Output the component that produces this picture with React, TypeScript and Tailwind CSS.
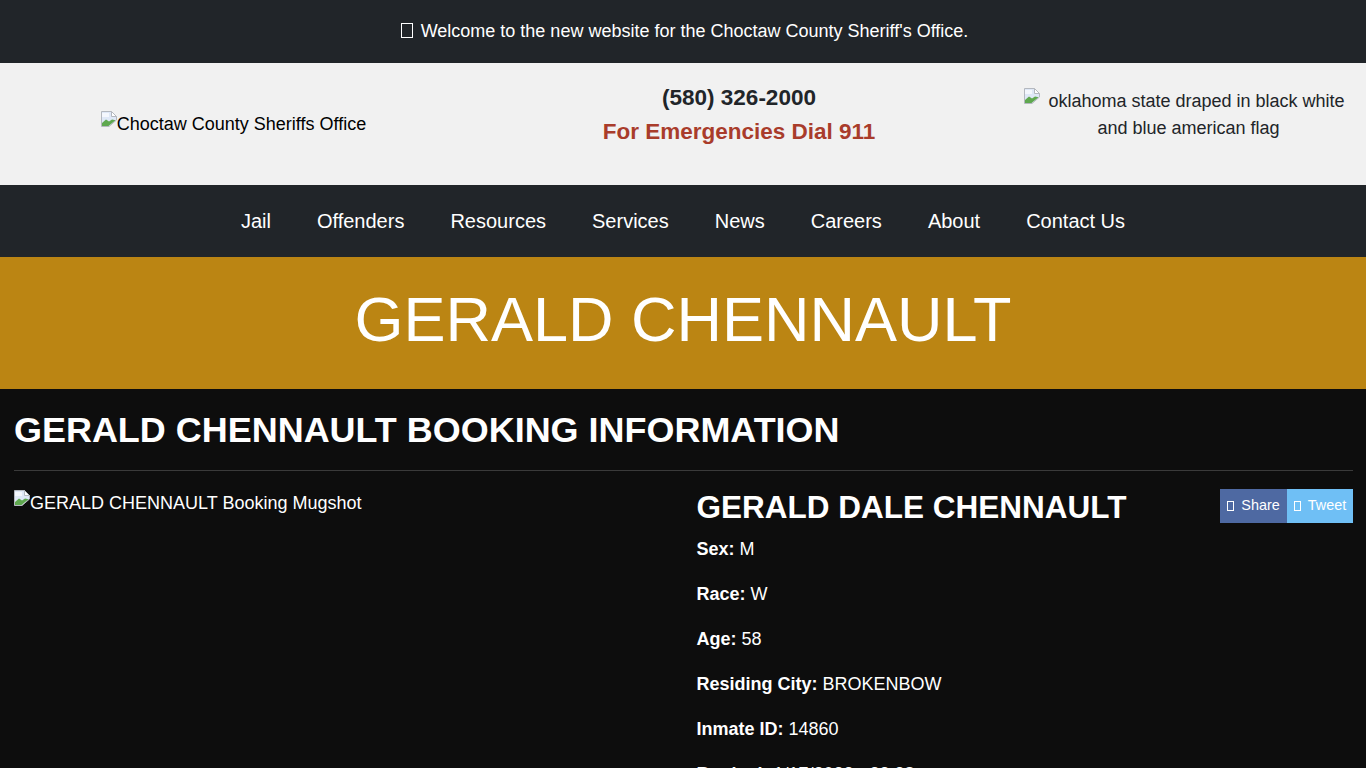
import React from 'react';

const navItems = ['Jail', 'Offenders', 'Resources', 'Services', 'News', 'Careers', 'About', 'Contact Us'];

const details = [
  { label: 'Sex:', value: 'M' },
  { label: 'Race:', value: 'W' },
  { label: 'Age:', value: '58' },
  { label: 'Residing City:', value: 'BROKENBOW' },
  { label: 'Inmate ID:', value: '14860' },
  { label: 'Booked:', value: '1/17/2022 - 23:38' },
];

// broken image placeholder, same as the browser draws for a missing file
const BrokenImage = ({ className = '' }: { className?: string }) => (
  <svg width="16" height="16" viewBox="0 0 16 16" className={`inline-block align-top ${className}`}>
    <path d="M0.5 0.5H10.5L15.5 5.5V9L8 15.5H0.5Z" fill="#dfe8f7" stroke="#b4b8bf" />
    <path d="M10.5 0.5V5.5H15.5Z" fill="#ffffff" stroke="#b4b8bf" />
    <path d="M1 15V12L5 8.5L8 10.5L11 8.5L14.5 9.2L7.5 15Z" fill="#5fa84f" />
    <path d="M1 2H8V6H1Z" fill="#f4f7fd" />
  </svg>
);

// font glyph that did not load, shows as an empty box
const MissingGlyph = ({ className }: { className: string }) => (
  <span className={`inline-block border border-current ${className}`} />
);

export default function App() {
  return (
    <div className="h-[768px] overflow-hidden bg-[#0d0d0d] text-white font-['Liberation_Sans',Arial,sans-serif]">
      <div className="flex h-[63px] items-center justify-center bg-[#212529] pb-[2px] pl-[3px] text-lg">
        <MissingGlyph className="mr-2 h-[15px] w-[12px]" />
        <span>Welcome to the new website for the Choctaw County Sheriff's Office.</span>
      </div>

      <header className="grid h-[122px] grid-cols-[467px_544px_355px] items-center bg-[#f1f1f1] text-[#212529]">
        <div className="text-center text-lg leading-[27px] text-black">
          <BrokenImage />
          Choctaw County Sheriffs Office
        </div>
        <div className="pb-[18px] text-center text-[22.5px] font-bold">
          <div className="leading-[34px]">(580) 326-2000</div>
          <div className="leading-[34px] text-[#a93c2b]">For Emergencies Dial 911</div>
        </div>
        <div className="pb-[18px] text-center text-lg leading-[27px]">
          <div className="pr-[9px]">
            <BrokenImage className="mr-[9px] translate-x-px" />
            oklahoma state draped in black white
          </div>
          <div>and blue american flag</div>
        </div>
      </header>

      <nav className="flex h-[72px] items-center justify-center gap-[46px] bg-[#212529] text-xl">
        {navItems.map((item) => (
          <a key={item} href="#">
            {item}
          </a>
        ))}
      </nav>

      <div className="flex h-[132px] items-center justify-center bg-[#bb8513] pb-[8px] text-[63px]">GERALD CHENNAULT</div>

      <main className="pr-[13px] pl-[14px]">
        <h1 className="border-b border-[#3a3a3a] pt-[19px] pb-[19px] text-[35.96px] leading-[43px] font-bold">
          GERALD CHENNAULT BOOKING INFORMATION
        </h1>
        <div className="flex pt-[19px]">
          <div className="w-[682.5px] text-lg leading-[27px]">
            <BrokenImage />
            GERALD CHENNAULT Booking Mugshot
          </div>
          <div className="-mt-px flex-1">
            <div className="flex items-start justify-between">
              <h2 className="-mt-px text-[31.5px] leading-[38px] font-bold">GERALD DALE CHENNAULT</h2>
              <div className="flex h-[34px] text-[14.4px]">
                <a href="#" className="flex w-[67px] items-center justify-center gap-[7px] bg-[#4e69a2]">
                  <MissingGlyph className="h-[10px] w-[7px]" />
                  Share
                </a>
                <a href="#" className="flex w-[66px] items-center justify-center gap-[7px] bg-[#6fbff5]">
                  <MissingGlyph className="h-[10px] w-[7px]" />
                  Tweet
                </a>
              </div>
            </div>
            <div className="pt-[10px] text-lg leading-[27px]">
              {details.map((row) => (
                <p key={row.label} className="mb-[18px]">
                  <strong>{row.label}</strong> {row.value}
                </p>
              ))}
            </div>
          </div>
        </div>
      </main>
    </div>
  );
}
